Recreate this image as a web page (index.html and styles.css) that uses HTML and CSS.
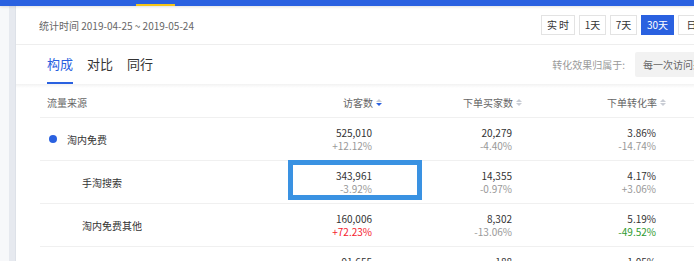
FILE: index.html
```html
<!DOCTYPE html>
<html lang="zh-CN">

<head>
  <meta charset="UTF-8">
  <title>流量来源构成</title>
  <link rel="stylesheet" href="styles.css">
</head>

<body>
  <div class="topbar"><span class="topbar__mark"></span></div>

  <div class="page">
    <div class="rail"></div>

    <div class="card">
      <!-- STATS RANGE + PERIOD SWITCH -->
      <div class="stats">
        <span class="stats__range">统计时间 2019-04-25 ~ 2019-05-24</span>
        <div class="periods">
          <button class="period period--wide">实 时</button>
          <button class="period">1天</button>
          <button class="period">7天</button>
          <button class="period period--active">30天</button>
          <button class="period">日</button>
        </div>
      </div>

      <!-- TABS -->
      <div class="tabs">
        <div class="tabs__list">
          <a class="tab tab--active">构成</a>
          <a class="tab">对比</a>
          <a class="tab">同行</a>
        </div>
        <div class="attr">
          <span class="attr__label">转化效果归属于:</span>
          <span class="attr__select">每一次访问来源</span>
        </div>
      </div>
      <div class="shade"></div>

      <!-- TABLE -->
      <div class="table">
        <div class="row row--head">
          <div class="cell">流量来源</div>
          <div class="cell cell--sort">访客数 <span class="sort sort--desc"></span></div>
          <div class="cell cell--sort">下单买家数 <span class="sort"></span></div>
          <div class="cell cell--sort">下单转化率 <span class="sort"></span></div>
        </div>

        <div class="row">
          <div class="cell cell--source"><span class="dot"></span>淘内免费</div>
          <div class="cell cell--num"><span>525,010</span><span class="delta">+12.12%</span></div>
          <div class="cell cell--num"><span>20,279</span><span class="delta">-4.40%</span></div>
          <div class="cell cell--num"><span>3.86%</span><span class="delta">-14.74%</span></div>
        </div>

        <div class="row">
          <div class="cell cell--child">手淘搜索</div>
          <div class="cell cell--num"><span>343,961</span><span class="delta">-3.92%</span></div>
          <div class="cell cell--num"><span>14,355</span><span class="delta">-0.97%</span></div>
          <div class="cell cell--num"><span>4.17%</span><span class="delta">+3.06%</span></div>
          <div class="mark"></div>
        </div>

        <div class="row">
          <div class="cell cell--child">淘内免费其他</div>
          <div class="cell cell--num"><span>160,006</span><span class="delta delta--up">+72.23%</span></div>
          <div class="cell cell--num"><span>8,302</span><span class="delta">-13.06%</span></div>
          <div class="cell cell--num"><span>5.19%</span><span class="delta delta--down">-49.52%</span></div>
        </div>

        <div class="row">
          <div class="cell cell--child">付费流量</div>
          <div class="cell cell--num"><span>91,655</span><span class="delta">+8.41%</span></div>
          <div class="cell cell--num"><span>188</span><span class="delta">-2.10%</span></div>
          <div class="cell cell--num"><span>1.05%</span><span class="delta">-9.33%</span></div>
        </div>
      </div>
    </div>
  </div>
</body>

</html>
```

FILE: styles.css
```css
:root {
  --blue: #2a61e0;
  --markBlue: #3a92e2;
  --textColor: #333;
  --mutedColor: #666;
  --lightColor: #999;
  --lineColor: #f0f0f0;
}

* {
  box-sizing: border-box;
}

html,
body {
  margin: 0;
  width: 694px;
  height: 271px;
  overflow: hidden;
  background: #fff;
}

body {
  font-family: "Noto Sans CJK SC", "Noto Sans", sans-serif;
  font-size: 10px;
  color: var(--textColor);
}

.topbar {
  display: flex;
  height: 6px;
  padding-left: 136px;
  background: var(--blue);
  box-shadow: 0 1px 3px rgba(0, 0, 0, 0.12);
  position: relative;
  z-index: 1;
}

.topbar__mark {
  align-self: flex-end;
  width: 39px;
  height: 2px;
  background: #f5c518;
}

.page {
  display: flex;
  height: 255px;
  overflow: hidden;
}

.rail {
  flex: none;
  width: 16px;
  background: linear-gradient(to right, #f7f8fa 9px, #e6e9ef 9px, #e6e9ef 15px, #dde1e8 15px);
}

.card {
  flex: none;
  width: 724px;
  background: #fff;
}

/* stats header */

.stats {
  display: flex;
  align-items: center;
  height: 39px;
  padding-left: 23px;
  border-bottom: 1px solid #eee;
}

.stats__range {
  color: var(--mutedColor);
}

.periods {
  display: flex;
  gap: 4px;
  margin-left: auto;
  padding-right: 35px;
}

.period {
  height: 20px;
  width: 27px;
  padding: 0;
  border: 1px solid #e3e3e3;
  background: #fff;
  color: var(--textColor);
  font: inherit;
  line-height: 18px;
}

.period--wide {
  width: 34px;
}

.period--active {
  width: 33px;
  background: var(--blue);
  border-color: var(--blue);
  color: #fff;
}

/* tabs */

.tabs {
  display: flex;
  justify-content: space-between;
  height: 39px;
  padding-left: 31px;
}

.tabs__list {
  display: flex;
  gap: 14px;
}

.tab {
  height: 39px;
  line-height: 37px;
  font-size: 13px;
  color: var(--textColor);
  border-bottom: 2px solid transparent;
}

.tab--active {
  color: var(--blue);
  border-bottom-color: var(--blue);
}

.attr {
  display: flex;
  align-items: center;
  gap: 10px;
  margin-right: 5px;
}

.attr__label {
  color: var(--lightColor);
}

.attr__select {
  width: 100px;
  height: 25px;
  line-height: 25px;
  padding: 0 8px;
  border-radius: 2px;
  background: #f2f2f2;
  color: var(--mutedColor);
  white-space: nowrap;
}

.shade {
  height: 4px;
  background: linear-gradient(#f2f2f2, #fff);
}

/* table */

.table {
  padding-left: 24px;
}

.row {
  position: relative;
  display: grid;
  grid-template-columns: 204px 140px 140px 144px 1fr;
  align-items: center;
  height: 43px;
  border-bottom: 1px solid var(--lineColor);
}

.row--head {
  height: 30px;
  color: var(--mutedColor);
}

.row--head .cell:first-child {
  padding-left: 7px;
}

.cell--sort {
  display: flex;
  justify-content: flex-end;
  align-items: center;
  gap: 3px;
  padding-right: 2px;
}

.sort {
  display: inline-flex;
  flex-direction: column;
  gap: 1px;
  width: 6px;
}

.sort::before,
.sort::after {
  content: "";
  border-left: 3px solid transparent;
  border-right: 3px solid transparent;
}

.sort::before {
  border-bottom: 3px solid #c8ccd4;
}

.sort::after {
  border-top: 3px solid #c8ccd4;
}

.sort--desc::after {
  border-top-color: var(--blue);
}

.cell--source {
  display: flex;
  align-items: center;
  gap: 10px;
  padding-left: 9px;
}

.dot {
  width: 8px;
  height: 8px;
  border-radius: 50%;
  background: var(--blue);
}

.cell--child {
  padding-left: 42px;
}

.cell--num {
  display: flex;
  flex-direction: column;
  align-items: flex-end;
  padding-right: 12px;
  line-height: 13px;
}

.delta {
  color: var(--lightColor);
}

.delta--up {
  color: #f5222d;
}

.delta--down {
  color: #2f9a2f;
}

/* annotation drawn over the visitors cell */
.mark {
  position: absolute;
  left: 248px;
  top: -1px;
  width: 134px;
  height: 40px;
  border: 5px solid var(--markBlue);
}
```
